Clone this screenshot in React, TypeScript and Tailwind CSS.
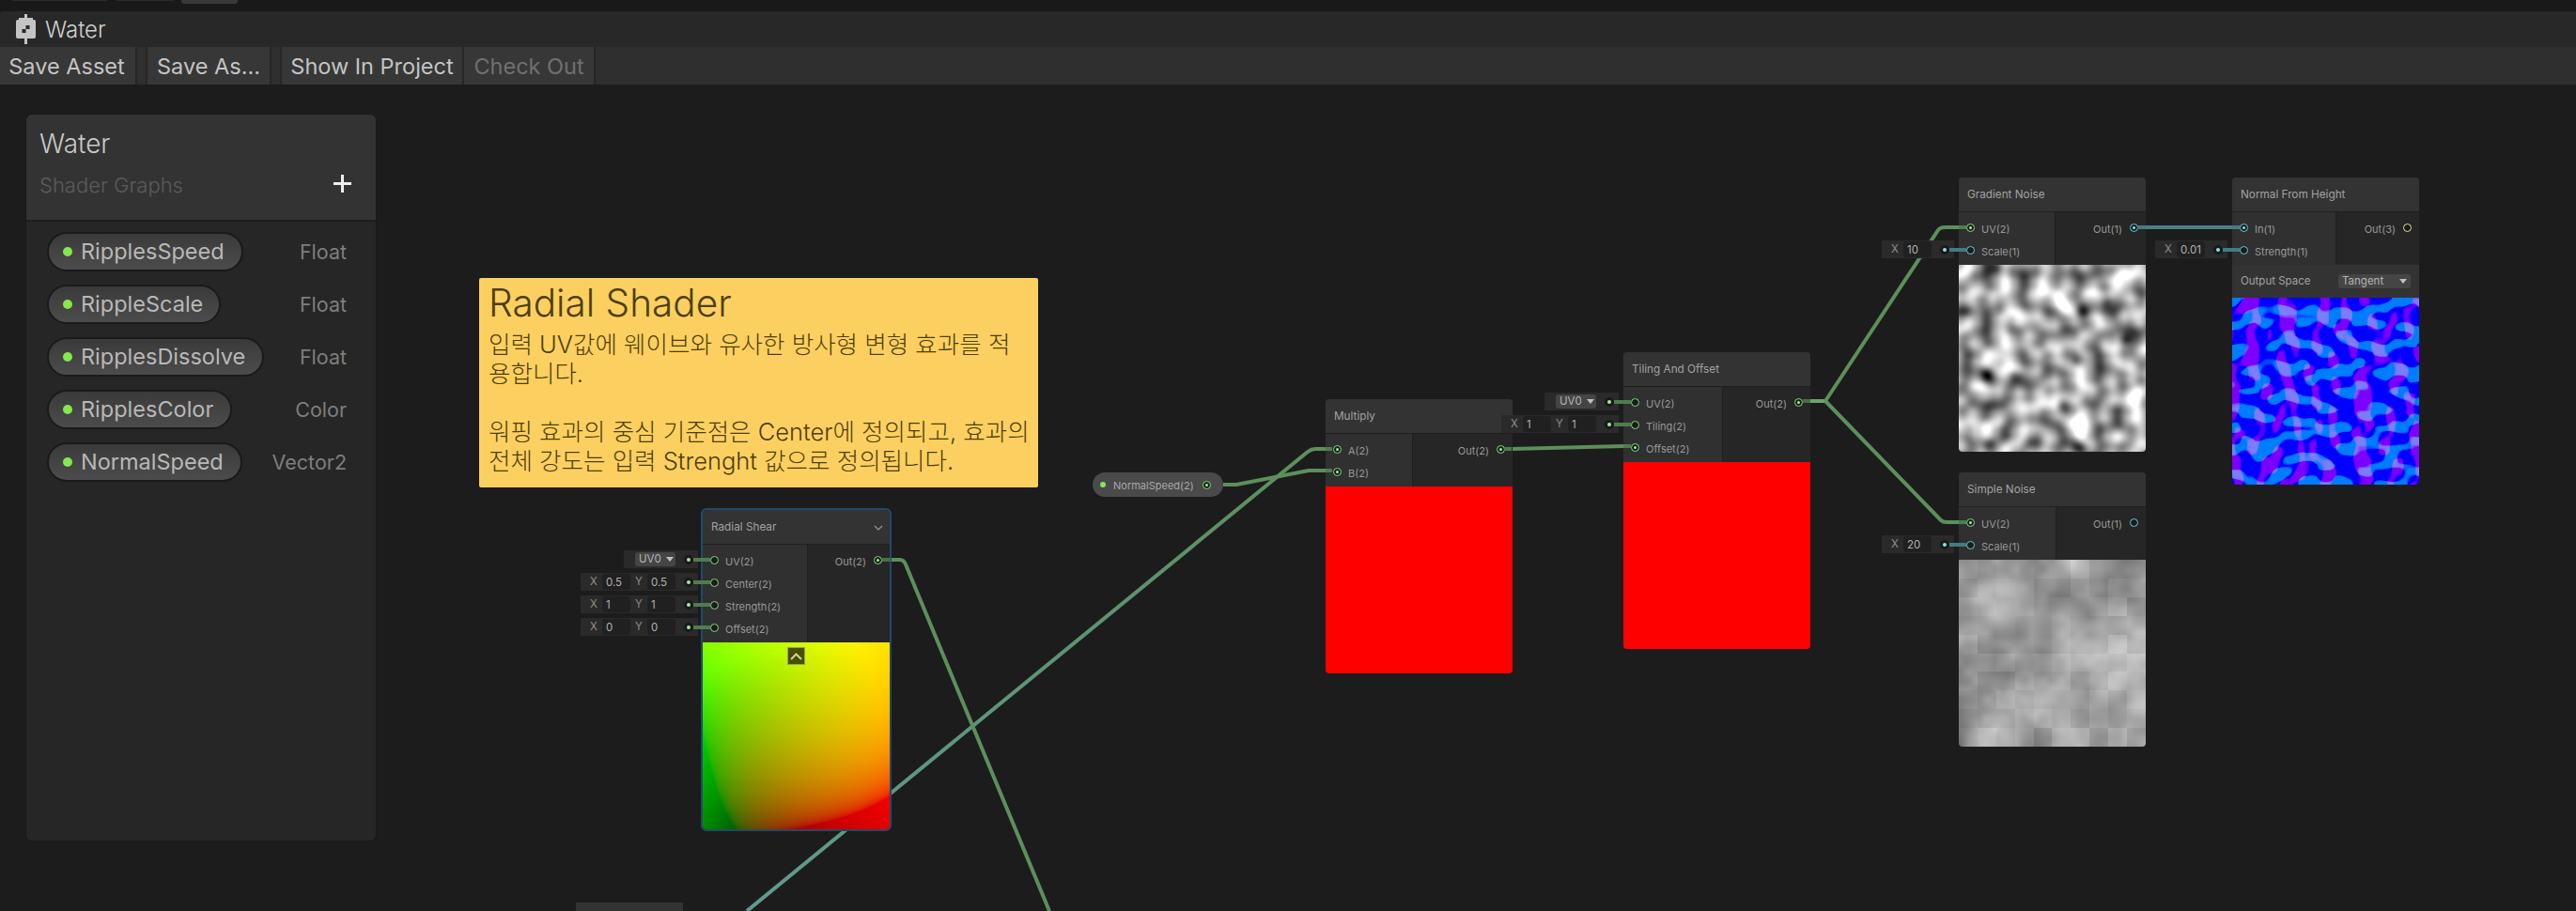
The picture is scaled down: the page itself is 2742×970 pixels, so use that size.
import { useEffect, useRef, type ReactNode } from "react";

const SANS = "font-['Inter','Noto_Sans_CJK_KR',sans-serif]";

const frac = (v: number) => v - Math.floor(v);
const toSrgb = (v: number) => {
  const c = Math.min(1, Math.max(0, v));
  return c <= 0.0031308 ? c * 12.92 : 1.055 * Math.pow(c, 1 / 2.4) - 0.055;
};

function gradDir(px: number, py: number): [number, number] {
  const p0 = px % 289;
  const p1 = py % 289;
  let x = (((34 * p0 + 1) * p0) % 289) + p1;
  x = ((34 * x + 1) * x) % 289;
  x = frac(x / 41) * 2 - 1;
  const a = x - Math.floor(x + 0.5);
  const b = Math.abs(x) - 0.5;
  const l = Math.hypot(a, b) || 1;
  return [a / l, b / l];
}

function gradientNoise(x: number, y: number) {
  const ix = Math.floor(x);
  const iy = Math.floor(y);
  const fx = x - ix;
  const fy = y - iy;
  const dot = (cx: number, cy: number) => {
    const d = gradDir(ix + cx, iy + cy);
    return d[0] * (fx - cx) + d[1] * (fy - cy);
  };
  const ease = (t: number) => t * t * t * (t * (t * 6 - 15) + 10);
  const ux = ease(fx);
  const uy = ease(fy);
  const a = dot(0, 0) + (dot(0, 1) - dot(0, 0)) * uy;
  const b = dot(1, 0) + (dot(1, 1) - dot(1, 0)) * uy;
  return a + (b - a) * ux + 0.5;
}

const rnd = (x: number, y: number) => frac(Math.sin(x * 12.9898 + y * 78.233) * 43758.5453);

function valueNoise(x: number, y: number) {
  const ix = Math.floor(x);
  const iy = Math.floor(y);
  let fx = x - ix;
  let fy = y - iy;
  fx = fx * fx * (3 - 2 * fx);
  fy = fy * fy * (3 - 2 * fy);
  const a = rnd(ix, iy) + (rnd(ix + 1, iy) - rnd(ix, iy)) * fx;
  const b = rnd(ix, iy + 1) + (rnd(ix + 1, iy + 1) - rnd(ix, iy + 1)) * fx;
  return a + (b - a) * fy;
}

function simpleNoise(u: number, v: number) {
  const x = u * 20;
  const y = v * 20;
  const smooth =
    valueNoise(x, y) * 0.125 + valueNoise(x / 2, y / 2) * 0.25 + valueNoise(x / 4, y / 4) * 0.5;
  const block = rnd(Math.floor(x / 2) + 3, Math.floor(y / 2) + 7) - 0.5;
  return 0.68 + (smooth - 0.5) * 0.5 + block * 0.09;
}

// spots read off the height preview, in preview pixels
const darkSpots = [
  [30, 118, 1], [61, 120, 0.6], [90, 118, 0.4], [110, 150, 0.8], [127, 102, 0.9], [131, 50, 0.9],
  [158, 40, 0.6], [178, 80, 0.9], [170, 172, 0.7], [130, 195, 1], [40, 3, 0.7], [11, 50, 0.6], [31, 190, 0.6],
];
const brightSpots = [[68, 62], [110, 41], [173, 24], [185, 140], [11, 178], [130, 172], [45, 100], [108, 140]];

function heightField(u: number, v: number) {
  const px = u * 199;
  const py = (1 - v) * 199;
  let h = 0.66 + (gradientNoise(u * 10, v * 10) - 0.5) * 0.75;
  for (const [x, y, a] of darkSpots) {
    h -= a * 0.55 * Math.exp(-((px - x) ** 2 + (py - y) ** 2) / 60);
  }
  for (const [x, y] of brightSpots) {
    h += 0.3 * Math.exp(-((px - x) ** 2 + (py - y) ** 2) / 120);
  }
  return h;
}

type PreviewKind = "radial" | "red" | "gradient" | "simple" | "normal";

function shade(kind: PreviewKind, u: number, v: number): [number, number, number] {
  if (kind === "radial") {
    const dx = u - 0.5;
    const dy = v - 0.5;
    const md = dx * dx + dy * dy;
    return [toSrgb(u + dy * md), toSrgb(v - dx * md), 0];
  }
  if (kind === "gradient") {
    const h = Math.min(1, Math.max(0, heightField(u, v)));
    return [h, h, h];
  }
  if (kind === "simple") {
    const h = Math.min(1, Math.max(0, simpleNoise(u, v)));
    return [h, h, h];
  }
  if (kind === "normal") {
    const e = 0.004;
    const nx = -(gradientNoise((u + e) * 10, v * 10) - gradientNoise((u - e) * 10, v * 10)) / (2 * e);
    const ny = -(gradientNoise(u * 10, (v + e) * 10) - gradientNoise(u * 10, (v - e) * 10)) / (2 * e);
    const rx = Math.min(0.2, Math.max(0, nx - 2) * 0.05);
    const gy = Math.min(0.2, Math.max(0, ny - 1) * 0.07);
    return [toSrgb(rx), toSrgb(gy), 1];
  }
  return [1, 0, 0];
}

function ShaderPreview({ kind, size = 199 }: { kind: PreviewKind; size?: number }) {
  const ref = useRef<HTMLCanvasElement>(null);

  useEffect(() => {
    const ctx = ref.current?.getContext("2d");
    if (!ctx) return;
    const img = ctx.createImageData(size, size);
    for (let py = 0; py < size; py++) {
      for (let px = 0; px < size; px++) {
        const [r, g, b] = shade(kind, (px + 0.5) / size, 1 - (py + 0.5) / size);
        const i = (py * size + px) * 4;
        img.data[i] = r * 255;
        img.data[i + 1] = g * 255;
        img.data[i + 2] = b * 255;
        img.data[i + 3] = 255;
      }
    }
    ctx.putImageData(img, 0, 0);
  }, [kind, size]);

  return <canvas ref={ref} width={size} height={size} className="block h-[199px] w-[199px] rounded-b-[4px]" />;
}

function Port({ color, connected }: { color: "green" | "teal" | "yellow"; connected?: boolean }) {
  const ring =
    color === "green" ? "border-[#7fdc7f]" : color === "teal" ? "border-[#68ccd6]" : "border-[#e4e47c]";
  const dot = color === "green" ? "bg-[#9af09a]" : color === "teal" ? "bg-[#84e4ec]" : "bg-[#e4e47c]";
  return (
    <span className={`flex h-[9px] w-[9px] shrink-0 items-center justify-center rounded-full border-[1.5px] bg-[#1b1b1b] ${ring}`}>
      {connected && <span className={`h-[3px] w-[3px] rounded-full ${dot}`} />}
    </span>
  );
}

function DotSlot({ color }: { color: "green" | "teal" }) {
  return (
    <span className="ml-[9px] mr-[5px] flex h-[10px] w-[10px] shrink-0 items-center justify-center rounded-full bg-[#1a1a1a]">
      <span className={`h-[4px] w-[4px] rounded-full ${color === "green" ? "bg-[#9af09a]" : "bg-[#84e4ec]"}`} />
    </span>
  );
}

function Field({ label, value }: { label: string; value: string }) {
  return (
    <>
      <span className="w-[18px] shrink-0 text-center text-[11.5px] text-[#8e8e8e]">{label}</span>
      <span className="h-[17px] w-[30px] rounded-[3px] bg-[#202020] pl-[4px] text-[11.5px] leading-[18px] text-[#b0b0b0]">{value}</span>
    </>
  );
}

function Control({ children, color = "green" }: { children: ReactNode; color?: "green" | "teal" }) {
  return (
    <div className="absolute right-full top-[2px] mr-[5px] flex h-[19px] items-center bg-[#2a2a2a] pl-[5px]">
      {children}
      <DotSlot color={color} />
    </div>
  );
}

function Uv0() {
  return (
    <span className="ml-[7px] flex h-[15px] w-[43px] items-center gap-[5px] rounded-[3px] bg-[#454545] pl-[4px] text-[11.5px] leading-none text-[#b4b4b4]">
      UV0
      <span className="h-0 w-0 border-x-[4px] border-t-[5px] border-x-transparent border-t-[#c0c0c0]" />
    </span>
  );
}

function InRow({ label, port, control }: { label: string; port: ReactNode; control?: ReactNode }) {
  return (
    <div className="relative flex h-[24px] items-center gap-[7px] pl-[8px]">
      {control}
      {port}
      <span className="translate-y-[2px] whitespace-nowrap text-[11px] text-[#989898]">{label}</span>
    </div>
  );
}

function Node({
  title,
  place,
  leftWidth,
  inputs,
  output,
  chevron,
  children,
  selected,
}: {
  title: string;
  place: string;
  leftWidth: string;
  inputs: ReactNode;
  output: ReactNode;
  chevron?: boolean;
  children?: ReactNode;
  selected?: boolean;
}) {
  return (
    <div
      className={`absolute w-[199px] rounded-[4px] bg-[#262626] ${place} ${selected ? "outline-2 outline-offset-[0px] outline-[#1f4b69]" : ""}`}
    >
      <div className="flex h-[37px] items-center justify-between rounded-t-[4px] border-b border-[#1f1f1f] bg-[#333333] pl-[9px] pr-[7px] pt-[1px] text-[11.75px] text-[#a2a2a2]">
        {title}
        {chevron && (
          <svg width="10" height="6" viewBox="0 0 10 6" fill="none" stroke="#9a9a9a" strokeWidth="1.2">
            <path d="M1 1l4 4 4-4" />
          </svg>
        )}
      </div>
      <div className="flex">
        <div className={`shrink-0 border-r border-[#1f1f1f] bg-[#303030] py-[4px] ${leftWidth}`}>{inputs}</div>
        <div className="flex h-[24px] flex-1 translate-y-[4px] items-center justify-end gap-[8px] pr-[8px] text-[11px] text-[#989898]">
          {output}
        </div>
      </div>
      {children}
    </div>
  );
}

const Out = ({ label, color, connected }: { label: string; color: "green" | "teal" | "yellow"; connected?: boolean }) => (
  <>
    <span className="translate-y-[2px]">{label}</span>
    <Port color={color} connected={connected} />
  </>
);

const properties = [
  { name: "RipplesSpeed", type: "Float", width: "w-[209px]" },
  { name: "RippleScale", type: "Float", width: "w-[185px]" },
  { name: "RipplesDissolve", type: "Float", width: "w-[231px]" },
  { name: "RipplesColor", type: "Color", width: "w-[197px]" },
  { name: "NormalSpeed", type: "Vector2", width: "w-[208px]" },
];

function Blackboard() {
  return (
    <div className="absolute left-[28px] top-[32px] h-[773px] w-[372px] overflow-hidden rounded-[6px] bg-[#262626] shadow-[0_0_0_1px_#191919]">
      <div className="relative h-[114px] border-b-2 border-[#1e1e1e] bg-[#333333] pl-[14px] pt-[13px]">
        <div className="text-[28px] font-light leading-[36px] text-[#c8c8c8]">Water</div>
        <div className="mt-[12px] text-[22px] font-light leading-[28px] text-[#5c5c5c]">Shader Graphs</div>
        <svg className="absolute right-[25px] top-[63px]" width="21" height="21" viewBox="0 0 21 21" fill="#eeeeee">
          <rect x="9" y="1" width="3" height="19" />
          <rect x="1" y="9" width="19" height="3" />
        </svg>
      </div>
      <div className="flex flex-col gap-[14px] pl-[22px] pr-[31px] pt-[11px]">
        {properties.map((p) => (
          <div key={p.name} className="flex items-center justify-between">
            <div
              className={`flex h-[42px] items-center gap-[9px] whitespace-nowrap rounded-full border-2 border-[#1a1a1a] bg-gradient-to-b from-[#3a3a3a] to-[#4c4c4c] pl-[15px] text-[23.5px] text-[#b8b8b8] ${p.width}`}
            >
              <span className="h-[10px] w-[10px] rounded-full bg-[#84e84e]" />
              {p.name}
            </div>
            <span className="text-[21.5px] text-[#7e7e7e]">{p.type}</span>
          </div>
        ))}
      </div>
    </div>
  );
}

function StickyNote() {
  return (
    <div className="absolute left-[510px] top-[206px] h-[223px] w-[595px] rounded-[2px] bg-[#fcd060] pl-[10px] pt-[2px] font-light text-[#4f3e0b]">
      <div className="text-[40.5px] leading-[50px]">Radial Shader</div>
      <div className="mt-[3px] whitespace-nowrap text-[25.5px] leading-[31px]">
        입력 UV값에 웨이브와 유사한 방사형 변형 효과를 적<br />
        용합니다.<br />
        <br />
        워핑 효과의 중심 기준점은 Center에 정의되고, 효과의<br />
        전체 강도는 입력 Strenght 값으로 정의됩니다.
      </div>
    </div>
  );
}

function Wires() {
  return (
    <svg className="absolute inset-0" width="2742" height="880" viewBox="0 90 2742 880" fill="none" strokeLinejoin="round">
      <defs>
        <linearGradient id="uvWire" gradientUnits="userSpaceOnUse" x1="795" y1="970" x2="1395" y2="478">
          <stop offset="0" stopColor="#5f9a92" />
          <stop offset="1" stopColor="#5c8f5c" />
        </linearGradient>
      </defs>
      <path d="M795 970L1392 481Q1396 478 1400 478H1411" stroke="url(#uvWire)" strokeWidth="4" />
      <path d="M948 596H958Q962 596 964 601L1117 970" stroke="#5c8f5c" strokeWidth="4" />
      <path d="M1302 516H1316L1393 501H1411" stroke="#5c8f5c" strokeWidth="4" />
      <path d="M1609 478L1728 475" stroke="#5c8f5c" strokeWidth="4" />
      <path d="M1927 427H1943" stroke="#6aa46a" strokeWidth="4" />
      <path d="M1943 427L2063 245Q2065 242 2071 242H2085" stroke="#5c8f5c" strokeWidth="4" />
      <path d="M1943 427L2066 554Q2068 556 2072 556H2085" stroke="#5c8f5c" strokeWidth="4" />
      <path d="M2284 242H2376" stroke="#4a8084" strokeWidth="4" />
    </svg>
  );
}

// short wire ends that sit on top of the node bodies
function WireStubs() {
  const green = [
    "M738 596H756",
    "M738 620H756",
    "M738 644H756",
    "M738 668H756",
    "M1411 478H1418",
    "M1411 501H1418",
    "M1601 478H1609",
    "M1728 475H1736",
    "M1718 428H1736",
    "M1718 452H1736",
    "M2085 242H2093",
    "M2085 556H2093",
  ];
  const teal = ["M2275 242H2284", "M2376 242H2384", "M2075 266H2093", "M2366 266H2384", "M2075 580H2093"];
  return (
    <svg className="pointer-events-none absolute inset-0" width="2742" height="880" viewBox="0 90 2742 880" fill="none">
      {green.map((d) => (
        <path key={d} d={d} stroke="#4f7d4f" strokeWidth="4" />
      ))}
      <path d="M939 596H948" stroke="#4a6b4a" strokeWidth="4" />
      <path d="M1919 427H1927" stroke="#4a6b4a" strokeWidth="4" />
      {teal.map((d) => (
        <path key={d} d={d} stroke="#467a80" strokeWidth="4" />
      ))}
    </svg>
  );
}

function Graph() {
  return (
    <div className="relative flex-1 overflow-hidden bg-[#1c1c1c]">
      <Wires />
      <Blackboard />
      <StickyNote />

      <Node
        title="Radial Shear"
        place="left-[748px] top-[453px]"
        leftWidth="w-[112px]"
        chevron
        selected
        output={<Out label="Out(2)" color="green" connected />}
        inputs={
          <>
            <InRow label="UV(2)" port={<Port color="green" />} control={<Control><Uv0 /></Control>} />
            <InRow label="Center(2)" port={<Port color="green" />} control={<Control><Field label="X" value="0.5" /><Field label="Y" value="0.5" /></Control>} />
            <InRow label="Strength(2)" port={<Port color="green" />} control={<Control><Field label="X" value="1" /><Field label="Y" value="1" /></Control>} />
            <InRow label="Offset(2)" port={<Port color="green" />} control={<Control><Field label="X" value="0" /><Field label="Y" value="0" /></Control>} />
          </>
        }
      >
        <div className="relative">
          <ShaderPreview kind="radial" />
          <div className="absolute left-[90px] top-[5px] flex h-[19px] w-[19px] items-center justify-center border border-[#9c9f5c] bg-[#464e00]">
            <svg width="13" height="8" viewBox="0 0 13 8" fill="none" stroke="#d0d2a0" strokeWidth="2">
              <path d="M1 7l5.500-5.500L12 7" />
            </svg>
          </div>
        </div>
      </Node>

      {/* node cut off by the bottom of the window */}
      <div className="absolute left-[613px] top-[871px] h-[20px] w-[114px] bg-[#333333]" />

      <div className="absolute left-[1163px] top-[413px] flex h-[26px] w-[139px] items-center whitespace-nowrap rounded-full bg-[#4a4a4a] pl-[8px] text-[11px] text-[#a8a8a8]">
        <span className="mr-[8px] h-[6px] w-[6px] rounded-full bg-[#84e84e]" />
        <span className="translate-y-[1px]">NormalSpeed(2)</span>
        <span className="ml-[9px]">
          <Port color="green" connected />
        </span>
      </div>

      <Node
        title="Multiply"
        place="left-[1411px] top-[335px]"
        leftWidth="w-[93px]"
        output={<Out label="Out(2)" color="green" connected />}
        inputs={
          <>
            <InRow label="A(2)" port={<Port color="green" connected />} />
            <InRow label="B(2)" port={<Port color="green" connected />} />
          </>
        }
      >
        <ShaderPreview kind="red" />
      </Node>

      <Node
        title="Tiling And Offset"
        place="left-[1728px] top-[285px]"
        leftWidth="w-[106px]"
        output={<Out label="Out(2)" color="green" connected />}
        inputs={
          <>
            <InRow label="UV(2)" port={<Port color="green" />} control={<Control><Uv0 /></Control>} />
            <InRow label="Tiling(2)" port={<Port color="green" />} control={<Control><Field label="X" value="1" /><Field label="Y" value="1" /></Control>} />
            <InRow label="Offset(2)" port={<Port color="green" connected />} />
          </>
        }
      >
        <ShaderPreview kind="red" />
      </Node>

      <Node
        title="Gradient Noise"
        place="left-[2085px] top-[99px]"
        leftWidth="w-[103px]"
        output={<Out label="Out(1)" color="teal" connected />}
        inputs={
          <>
            <InRow label="UV(2)" port={<Port color="green" connected />} />
            <InRow label="Scale(1)" port={<Port color="teal" />} control={<Control color="teal"><Field label="X" value="10" /></Control>} />
          </>
        }
      >
        <ShaderPreview kind="gradient" />
      </Node>

      <Node
        title="Simple Noise"
        place="left-[2085px] top-[413px]"
        leftWidth="w-[104px]"
        output={<Out label="Out(1)" color="teal" />}
        inputs={
          <>
            <InRow label="UV(2)" port={<Port color="green" connected />} />
            <InRow label="Scale(1)" port={<Port color="teal" />} control={<Control color="teal"><Field label="X" value="20" /></Control>} />
          </>
        }
      >
        <ShaderPreview kind="simple" />
      </Node>

      <Node
        title="Normal From Height"
        place="left-[2376px] top-[99px]"
        leftWidth="w-[111px]"
        output={<Out label="Out(3)" color="yellow" />}
        inputs={
          <>
            <InRow label="In(1)" port={<Port color="teal" connected />} />
            <InRow label="Strength(1)" port={<Port color="teal" />} control={<Control color="teal"><Field label="X" value="0.01" /></Control>} />
          </>
        }
      >
        <div className="flex h-[35px] items-center justify-between bg-[#333333] pl-[9px] pr-[9px] text-[11.5px] text-[#a2a2a2]">
          Output Space
          <span className="flex h-[15px] w-[77px] items-center justify-between rounded-[3px] bg-[#454545] px-[4px] text-[11.5px] leading-none text-[#b4b4b4]">
            Tangent
            <span className="h-0 w-0 border-x-[4px] border-t-[5px] border-x-transparent border-t-[#c0c0c0]" />
          </span>
        </div>
        <ShaderPreview kind="normal" />
      </Node>

      <WireStubs />
    </div>
  );
}

const buttons = [
  { label: "Save Asset", className: "w-[146px] pr-[2px] text-[#c4c4c4] border-r-2" },
  { label: "Save As...", className: "ml-[9px] w-[134px] border-x-2 text-[#c4c4c4]" },
  { label: "Show In Project", className: "ml-[9px] w-[196px] border-x-2 text-[#c4c4c4]" },
  { label: "Check Out", className: "w-[140px] border-r-2 text-[#707070]" },
];

export default function App() {
  return (
    <div className={`flex h-[970px] w-[2742px] flex-col overflow-hidden bg-[#1c1c1c] ${SANS}`}>
      <div className="flex h-[12px] items-start bg-[#191919]">
        <span className="ml-[13px] h-[1px] w-[101px] bg-[#2c2c2c]" />
        <span className="ml-[10px] h-[1px] w-[61px] bg-[#2c2c2c]" />
        <span className="ml-[8px] h-[4px] w-[60px] rounded-b-[3px] bg-[#383838]" />
      </div>
      <div className="flex h-[38px] items-center gap-[10px] rounded-tl-[3px] bg-[#282828] pl-[17px]">
        <svg width="21" height="32" viewBox="0 0 21 32" fill="#c4c4c4">
          <rect x="9" y="0" width="3" height="32" />
          <rect x="3" y="4" width="15" height="2" />
          <rect x="0" y="6" width="21" height="20" rx="2" />
          <rect x="10.500" y="12" width="4" height="4" fill="#282828" />
          <rect x="6.500" y="16" width="4" height="4" fill="#282828" />
        </svg>
        <span className="pt-[2px] text-[24px] font-light text-[#d0d0d0]">Water</span>
      </div>
      <div className="flex h-[40px] items-stretch bg-[#2f2f2f]">
        {buttons.map((b) => (
          <div
            key={b.label}
            className={`flex items-center justify-center whitespace-nowrap border-[#262626] bg-[#373737] pt-[2px] text-[23.5px] ${b.className}`}
          >
            {b.label}
          </div>
        ))}
      </div>
      <Graph />
    </div>
  );
}
